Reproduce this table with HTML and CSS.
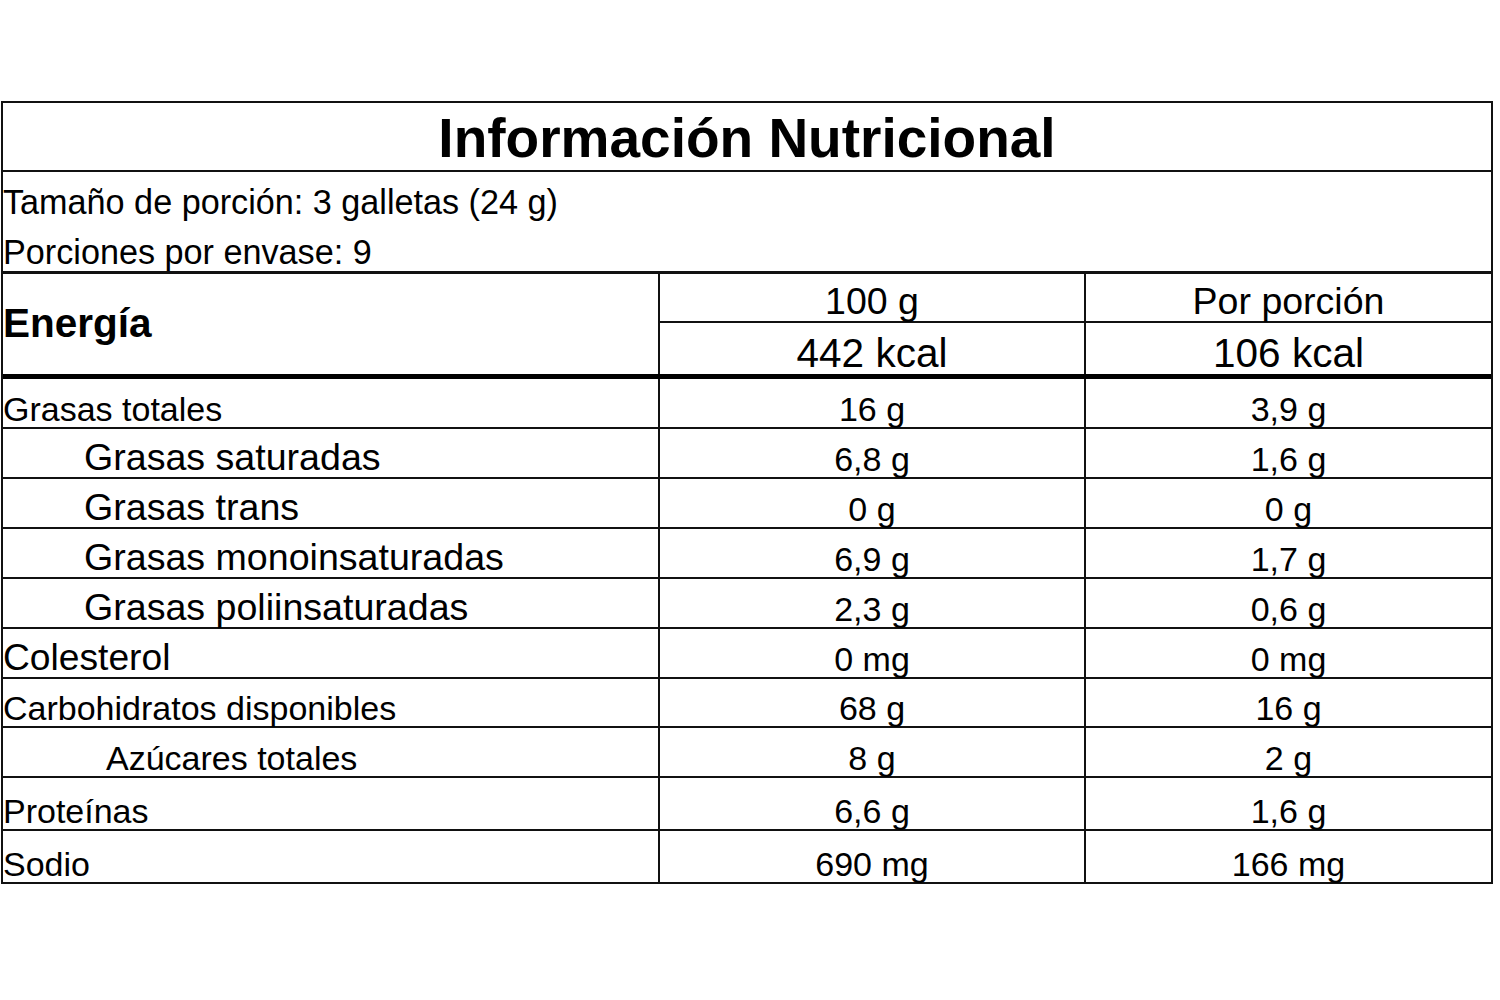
FILE: index.html
```html
<!DOCTYPE html>
<html lang="es">
<head>
<meta charset="utf-8">
<title>Información Nutricional</title>
<link rel="stylesheet" href="styles.css">
</head>
<body>
<div class="label">
  <div class="title">Información Nutricional</div>
  <div class="serving">
    <div class="line">Tamaño de porción: 3 galletas (24 g)</div>
    <div class="line">Porciones por envase: 9</div>
  </div>
  <div class="energy">
    <div class="energy-name">Energía</div>
    <div class="ecell ehead c2">100 g</div>
    <div class="ecell ehead c3">Por porción</div>
    <div class="ecell eval c2">442 kcal</div>
    <div class="ecell eval c3">106 kcal</div>
  </div>
  <div class="row h50"><div class="name">Grasas totales</div><div class="val c2">16 g</div><div class="val c3">3,9 g</div></div>
  <div class="row h50"><div class="name sub">Grasas saturadas</div><div class="val c2">6,8 g</div><div class="val c3">1,6 g</div></div>
  <div class="row h50"><div class="name sub">Grasas trans</div><div class="val c2">0 g</div><div class="val c3">0 g</div></div>
  <div class="row h50"><div class="name sub">Grasas monoinsaturadas</div><div class="val c2">6,9 g</div><div class="val c3">1,7 g</div></div>
  <div class="row h50"><div class="name sub">Grasas poliinsaturadas</div><div class="val c2">2,3 g</div><div class="val c3">0,6 g</div></div>
  <div class="row h50"><div class="name big">Colesterol</div><div class="val c2">0 mg</div><div class="val c3">0 mg</div></div>
  <div class="row h49"><div class="name">Carbohidratos disponibles</div><div class="val c2">68 g</div><div class="val c3">16 g</div></div>
  <div class="row h50"><div class="name sub2">Azúcares totales</div><div class="val c2">8 g</div><div class="val c3">2 g</div></div>
  <div class="row h53"><div class="name">Proteínas</div><div class="val c2">6,6 g</div><div class="val c3">1,6 g</div></div>
  <div class="row last"><div class="name">Sodio</div><div class="val c2">690 mg</div><div class="val c3">166 mg</div></div>
</div>
</body>
</html>
```

FILE: styles.css
```css
* {
  box-sizing: border-box;
}

html, body {
  margin: 0;
  padding: 0;
  background: #ffffff;
}

body {
  font-family: "Liberation Sans", Arial, sans-serif;
  color: #000;
}

.label {
  width: 1492px;
  margin: 101px 0 0 1px;
  border: 2px solid #111;
}

.title {
  height: 69px;
  border-bottom: 2px solid #111;
  font-size: 55px;
  font-weight: bold;
  line-height: 1;
  text-align: center;
  padding-top: 8px;
}

.serving {
  height: 102px;
  border-bottom: 3px solid #111;
  padding-top: 5px;
  font-size: 34.2px;
  line-height: 50px;
}

.energy {
  display: grid;
  grid-template-columns: 657px 426px 405px;
  grid-template-rows: 49px 51px;
  height: 105px;
  border-bottom: 5px solid #000;
}

.energy-name {
  grid-row: 1 / 3;
  grid-column: 1;
  border-right: 2px solid #111;
  font-weight: bold;
  font-size: 40.5px;
  display: flex;
  align-items: center;
  padding-bottom: 2px;
}

.ecell {
  display: flex;
  justify-content: center;
  align-items: flex-end;
  line-height: 1;
}

.ecell.c2 {
  border-right: 2px solid #111;
}

.ehead {
  border-bottom: 2px solid #111;
  font-size: 37.5px;
  padding-bottom: 1px;
}

.eval {
  font-size: 40.5px;
  padding-bottom: 1px;
}

.row {
  display: grid;
  grid-template-columns: 657px 426px 405px;
  border-bottom: 2px solid #111;
  line-height: 1;
}

.h50 { height: 50px; }
.h49 { height: 49px; }
.h53 { height: 53px; }
.last { height: 51px; border-bottom: none; }

.row > div {
  display: flex;
  align-items: flex-end;
}

.name {
  font-size: 34px;
  padding-bottom: 1px;
  border-right: 2px solid #111;
  white-space: nowrap;
}

.name.sub {
  font-size: 37.6px;
  padding-left: 81px;
  padding-bottom: 0;
}

.name.big {
  font-size: 37.2px;
  padding-bottom: 1px;
}

.name.sub2 {
  font-size: 34px;
  padding-left: 103px;
  padding-bottom: 1px;
}

.val {
  font-size: 34px;
  justify-content: center;
  padding-bottom: 1px;
}

.val.c2 {
  border-right: 2px solid #111;
}
```
